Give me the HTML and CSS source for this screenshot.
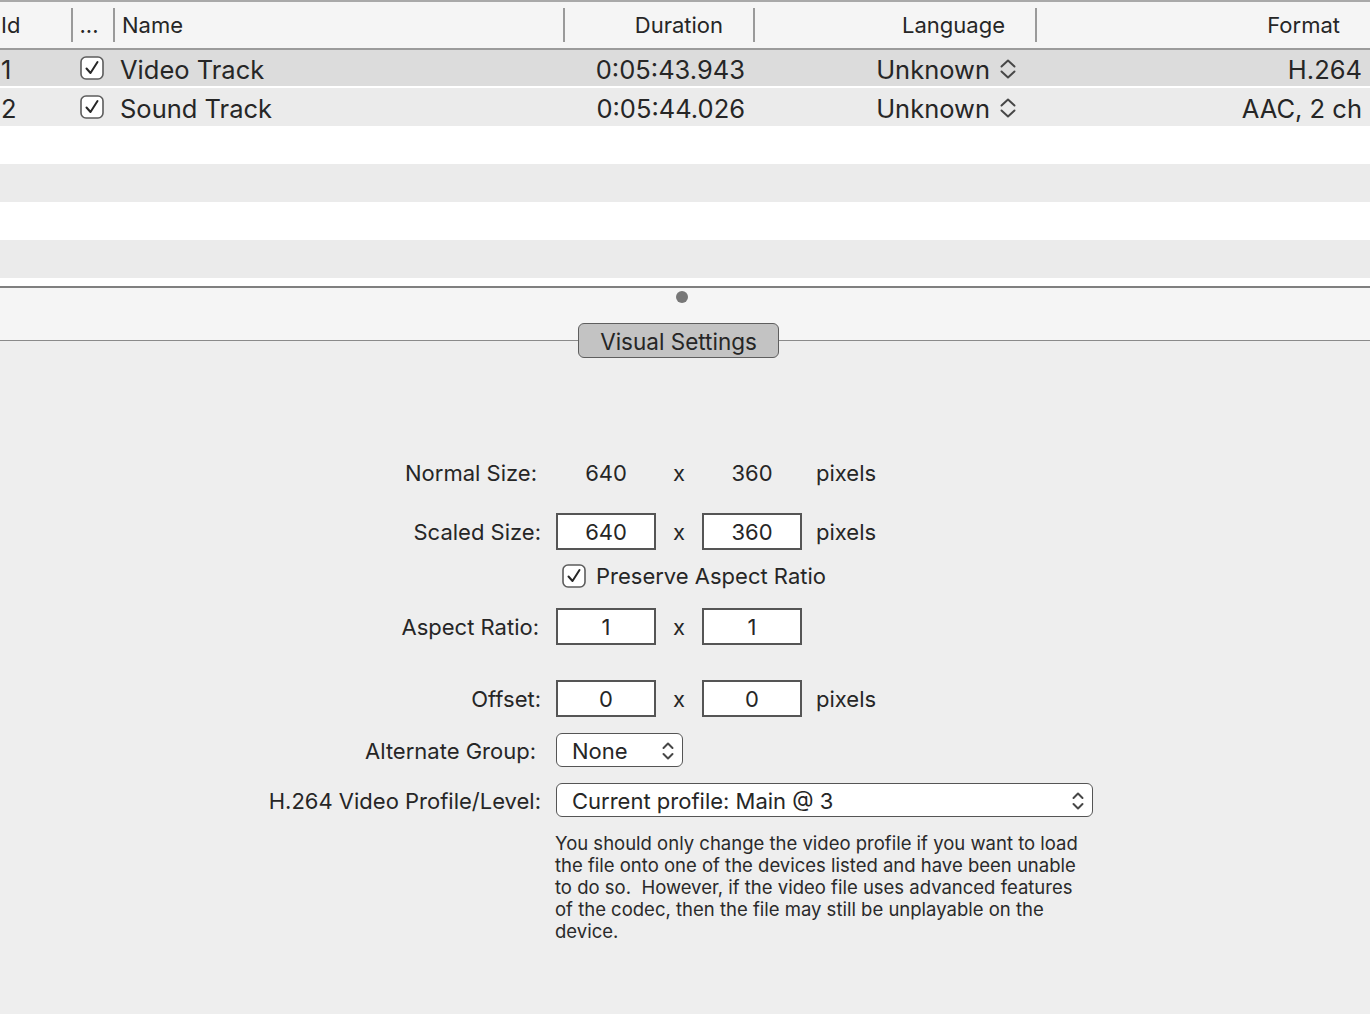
FILE: index.html
```html
<!DOCTYPE html>
<html lang="en">
<head>
  <meta charset="UTF-8" />
  <title>Track Settings</title>
  <link rel="stylesheet" href="styles.css">
</head>
<body>
  <div class="tracks">
    <div class="thead">
      <div class="th col-id">Id</div>
      <div class="th col-on">...</div>
      <div class="th col-name">Name</div>
      <div class="th col-dur">Duration</div>
      <div class="th col-lang">Language</div>
      <div class="th col-fmt">Format</div>
    </div>
    <div class="tbody">
      <div class="tr selected">
        <div class="td col-id">1</div>
        <div class="td col-on">
          <svg class="check" viewBox="0 0 24 24"><rect x="1" y="1" width="22" height="22" rx="5"/><path d="M6.5 12.5 L10.5 17 L17.5 6"/></svg>
        </div>
        <div class="td col-name">Video Track</div>
        <div class="td col-dur">0:05:43.943</div>
        <div class="td col-lang">Unknown
          <svg class="updown" viewBox="0 0 16 22"><path d="M1.5 8.5 L8 2.5 L14.5 8.5 M1.5 13.5 L8 19.5 L14.5 13.5"/></svg>
        </div>
        <div class="td col-fmt">H.264</div>
      </div>
      <div class="tr">
        <div class="td col-id">2</div>
        <div class="td col-on">
          <svg class="check" viewBox="0 0 24 24"><rect x="1" y="1" width="22" height="22" rx="5"/><path d="M6.5 12.5 L10.5 17 L17.5 6"/></svg>
        </div>
        <div class="td col-name">Sound Track</div>
        <div class="td col-dur">0:05:44.026</div>
        <div class="td col-lang">Unknown
          <svg class="updown" viewBox="0 0 16 22"><path d="M1.5 8.5 L8 2.5 L14.5 8.5 M1.5 13.5 L8 19.5 L14.5 13.5"/></svg>
        </div>
        <div class="td col-fmt">AAC, 2 ch</div>
      </div>
      <div class="tr"></div>
      <div class="tr"></div>
      <div class="tr"></div>
      <div class="tr"></div>
      <div class="tr"></div>
    </div>
  </div>

  <div class="splitter"><span class="grip"></span></div>

  <div class="group">
    <div class="group-title">
      <span class="rule rule-left"></span>
      <button class="tab">Visual Settings</button>
      <span class="rule"></span>
    </div>

    <div class="form">
      <div class="row row-normal">
        <label class="label">Normal Size:</label>
        <div class="field">
          <span class="value">640</span>
          <span class="times">x</span>
          <span class="value">360</span>
          <span class="unit">pixels</span>
        </div>
      </div>

      <div class="row row-scaled">
        <label class="label">Scaled Size:</label>
        <div class="field">
          <input class="box" type="text" value="640">
          <span class="times">x</span>
          <input class="box" type="text" value="360">
          <span class="unit">pixels</span>
        </div>
      </div>

      <div class="row row-preserve">
        <span class="label"></span>
        <div class="field">
          <label class="checkline">
            <svg class="check" viewBox="0 0 24 24"><rect x="1" y="1" width="22" height="22" rx="5"/><path d="M6.5 12.5 L10.5 17 L17.5 6"/></svg>
            Preserve Aspect Ratio
          </label>
        </div>
      </div>

      <div class="row row-aspect">
        <label class="label">Aspect Ratio:</label>
        <div class="field">
          <input class="box" type="text" value="1">
          <span class="times">x</span>
          <input class="box" type="text" value="1">
        </div>
      </div>

      <div class="row row-offset">
        <label class="label">Offset:</label>
        <div class="field">
          <input class="box" type="text" value="0">
          <span class="times">x</span>
          <input class="box" type="text" value="0">
          <span class="unit">pixels</span>
        </div>
      </div>

      <div class="row row-group">
        <label class="label">Alternate Group:</label>
        <div class="field">
          <div class="popup popup-small">
            <span>None</span>
            <svg class="updown small" viewBox="0 0 12 22"><path d="M1.5 8 L6 3.5 L10.5 8 M1.5 14 L6 18.5 L10.5 14"/></svg>
          </div>
        </div>
      </div>

      <div class="row row-profile">
        <label class="label">H.264 Video Profile/Level:</label>
        <div class="field">
          <div class="popup popup-wide">
            <span>Current profile: Main @ 3</span>
            <svg class="updown small" viewBox="0 0 12 22"><path d="M1.5 8 L6 3.5 L10.5 8 M1.5 14 L6 18.5 L10.5 14"/></svg>
          </div>
        </div>
      </div>

      <div class="row row-note">
        <span class="label"></span>
        <p class="note">You should only change the video profile if you want to load the file onto one of the devices listed and have been unable to do so.&nbsp; However, if the video file uses advanced features of the codec, then the file may still be unplayable on the device.</p>
      </div>
    </div>
  </div>
</body>
</html>
```

FILE: styles.css
```css
* {
  margin: 0;
  padding: 0;
  box-sizing: border-box;
}

body {
  width: 1370px;
  min-height: 1014px;
  overflow: hidden;
  background-color: #eeeeee;
  color: #262626;
  font-family: "Inter", "Liberation Sans", sans-serif;
}

/* ---- track table ---- */

.tracks {
  border-top: 2px solid #a9a9a9;
  background-color: #ffffff;
}

.thead {
  display: flex;
  align-items: center;
  height: 48px;
  background-color: #f5f5f5;
  border-bottom: 2px solid #9b9b9b;
  font-size: 22px;
}

.th {
  height: 34px;
  line-height: 34px;
  border-left: 2px solid #9a9a9a;
  white-space: nowrap;
}

.th.col-id {
  border-left: none;
}

.col-id  { width: 71px; padding-left: 1px; }
.col-on  { width: 42px; text-align: center; }
.col-name { width: 450px; padding-left: 7px; }
.col-dur { width: 190px; text-align: right; }
.col-lang { width: 282px; text-align: right; }
.col-fmt { flex: 1; text-align: right; }

.th.col-on {
  padding-right: 8px;
}

.th.col-dur,
.th.col-lang,
.th.col-fmt {
  padding-right: 30px;
}

.tbody {
  height: 236px;
  overflow: hidden;
}

.tr {
  display: flex;
  align-items: center;
  height: 38px;
  padding-top: 3px;
  font-size: 25.5px;
}

.tr:nth-child(even) {
  background-color: #ebebeb;
}

.tr.selected {
  background-color: #dcdcdc;
  border-bottom: 2px solid #ffffff;
}

.td {
  white-space: nowrap;
}

.td.col-on {
  display: flex;
  justify-content: center;
  margin-top: -3px;
}

.td.col-dur,
.td.col-fmt {
  padding-right: 8px;
}

.td.col-lang {
  display: flex;
  justify-content: flex-end;
  align-items: center;
  gap: 10px;
  padding-right: 19px;
}

.td.col-lang .updown {
  margin-top: -2px;
}

.check {
  width: 24px;
  height: 24px;
  flex: none;
}

.check rect {
  fill: #ffffff;
  stroke: #5c5c5c;
  stroke-width: 1.6;
}

.check path {
  fill: none;
  stroke: #262626;
  stroke-width: 2;
  stroke-linecap: round;
  stroke-linejoin: round;
}

.updown {
  width: 16px;
  height: 22px;
  flex: none;
}

.updown path {
  fill: none;
  stroke: #474747;
  stroke-width: 2;
  stroke-linecap: round;
  stroke-linejoin: round;
}

.updown.small {
  width: 12px;
  height: 22px;
}

/* ---- split view handle ---- */

.splitter {
  display: flex;
  justify-content: center;
  height: 37px;
  border-top: 2px solid #7f7f7f;
  background-color: #f5f5f5;
  padding-top: 3px;
}

.grip {
  width: 12px;
  height: 12px;
  margin-left: -6px;
  border-radius: 50%;
  background-color: #777777;
}

/* ---- visual settings group ---- */

.group-title {
  display: flex;
  align-items: center;
  height: 35px;
  background: linear-gradient(to bottom, #f5f5f5 0, #f5f5f5 17px, #eeeeee 17px);
}

.rule {
  flex: 1;
  height: 1.5px;
  background-color: #8a8a8a;
}

.rule-left {
  flex: 0 0 578px;
}

.tab {
  width: 201px;
  height: 35px;
  padding-top: 1px;
  font-family: inherit;
  font-size: 22.5px;
  color: #262626;
  background-color: #c3c3c3;
  border: 1.5px solid #5e5e5e;
  border-radius: 6px;
}

.form {
  padding-top: 95px;
}

.row {
  display: grid;
  grid-template-columns: 541px 1fr;
  column-gap: 15px;
  align-items: center;
  height: 38px;
  font-size: 22px;
}

.row-scaled   { margin-top: 21px; }
.row-preserve { margin-top: 7px; }
.row-aspect   { margin-top: 12px; }
.row-offset   { margin-top: 34px; }
.row-group    { margin-top: 14px; }
.row-profile  { margin-top: 12px; }

.row-note {
  height: auto;
  margin-top: 13px;
  align-items: start;
}

.label {
  padding-top: 2px;
  text-align: right;
  white-space: nowrap;
}

.row-normal .label { padding-right: 4px; }
.row-group .label  { padding-right: 5px; }
.row-aspect .label { padding-right: 2px; }

.field {
  display: flex;
  align-items: center;
}

.value,
.times,
.unit {
  padding-top: 2px;
}

.value {
  width: 100px;
  text-align: center;
}

.box {
  width: 100px;
  height: 37px;
  padding-top: 1px;
  border: 2px solid #555555;
  background-color: #ffffff;
  font-family: inherit;
  font-size: 22px;
  color: #262626;
  text-align: center;
  outline: none;
}

.times {
  width: 46px;
  text-align: center;
}

.unit {
  margin-left: 14px;
}

.checkline {
  display: flex;
  align-items: center;
  gap: 10px;
  padding-left: 6px;
}

.popup {
  display: flex;
  align-items: center;
  justify-content: space-between;
  height: 34px;
  padding: 1px 8px 0 15px;
  background-color: #ffffff;
  border: 1.5px solid #555555;
  border-radius: 6px;
}

.popup-small { width: 127px; }
.popup-wide  { width: 537px; }

.note {
  width: 530px;
  font-size: 18.5px;
  line-height: 22px;
  margin-left: -1px;
  color: #2a2a2a;
}
```
